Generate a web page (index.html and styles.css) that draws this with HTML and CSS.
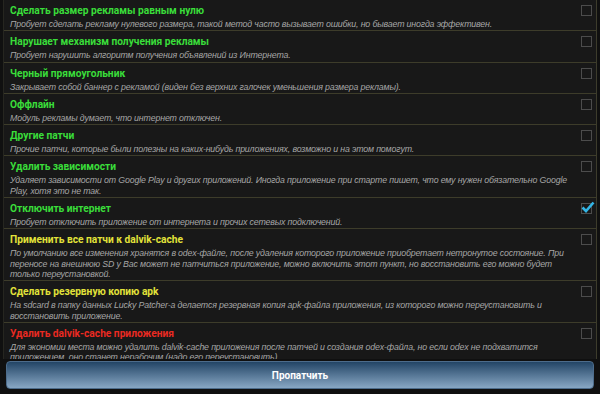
FILE: index.html
```html
<!DOCTYPE html>
<html lang="ru">
<head>
  <meta charset="UTF-8" />
  <title>Патчи</title>
  <meta name="viewport" content="width=device-width, initial-scale=1.0" />
  <link rel="stylesheet" href="styles.css">
</head>
<body>

<div class="list">
  <div class="item">
    <div class="text">
      <div class="title green">Сделать размер рекламы равным нулю</div>
      <div class="desc">Пробует сделать рекламу нулевого размера, такой метод часто вызывает ошибки, но бывает иногда эффективен.</div>
    </div>
    <span class="check"></span>
  </div>

  <div class="item">
    <div class="text">
      <div class="title green">Нарушает механизм получения рекламы</div>
      <div class="desc">Пробует нарушить алгоритм получения объявлений из Интернета.</div>
    </div>
    <span class="check"></span>
  </div>

  <div class="item">
    <div class="text">
      <div class="title green">Черный прямоугольник</div>
      <div class="desc">Закрывает собой баннер с рекламой (виден без верхних галочек уменьшения размера рекламы).</div>
    </div>
    <span class="check"></span>
  </div>

  <div class="item">
    <div class="text">
      <div class="title green">Оффлайн</div>
      <div class="desc">Модуль рекламы думает, что интернет отключен.</div>
    </div>
    <span class="check"></span>
  </div>

  <div class="item">
    <div class="text">
      <div class="title green">Другие патчи</div>
      <div class="desc">Прочие патчи, которые были полезны на каких-нибудь приложениях, возможно и на этом помогут.</div>
    </div>
    <span class="check"></span>
  </div>

  <div class="item">
    <div class="text">
      <div class="title green">Удалить зависимости</div>
      <div class="desc">Удаляет зависимости от Google Play и других приложений. Иногда приложение при старте пишет, что ему нужен обязательно Google Play, хотя это не так.</div>
    </div>
    <span class="check"></span>
  </div>

  <div class="item">
    <div class="text">
      <div class="title green">Отключить интернет</div>
      <div class="desc">Пробует отключить приложение от интернета и прочих сетевых подключений.</div>
    </div>
    <span class="check checked">
      <svg width="14" height="12" viewBox="0 0 14 12"><path d="M1.5 6.5 L5 10 L12.5 1.5" fill="none" stroke="#33b5e5" stroke-width="2.6"/></svg>
    </span>
  </div>

  <div class="item">
    <div class="text">
      <div class="title yellow">Применить все патчи к dalvik-cache</div>
      <div class="desc">По умолчанию все изменения хранятся в odex-файле, после удаления которого приложение приобретает нетронутое состояние. При переносе на внешнюю SD у Вас может не патчиться приложение, можно включить этот пункт, но восстановить его можно будет только переустановкой.</div>
    </div>
    <span class="check"></span>
  </div>

  <div class="item">
    <div class="text">
      <div class="title yellow">Сделать резервную копию apk</div>
      <div class="desc">На sdcard в папку данных Lucky Patcher-а делается резервная копия apk-файла приложения, из которого можно переустановить и восстановить приложение.</div>
    </div>
    <span class="check"></span>
  </div>

  <div class="item">
    <div class="text">
      <div class="title red">Удалить dalvik-cache приложения</div>
      <div class="desc">Для экономии места можно удалить dalvik-cache приложения после патчей и создания odex-файла, но если odex не подхватится приложением, оно станет нерабочим (надо его переустановить).</div>
    </div>
    <span class="check"></span>
  </div>
</div>

<div class="bottom">
  <button class="patch">Пропатчить</button>
</div>

</body>
</html>
```

FILE: styles.css
```css
html, body {
  height: 100%;
}
body {
  margin: 0;
  padding: 0;
  background: #101010;
  font-family: Roboto, "Noto Sans", sans-serif;
  display: flex;
  flex-direction: column;
  overflow: hidden;
}
.list {
  height: 360px;
  overflow: hidden;
  margin: 0 3px;
  background: #181818;
  border-left: 1px solid #262620;
  border-right: 1px solid #3d3c2c;
}
.item {
  display: flex;
  align-items: flex-start;
  padding: 5px 0 1px 6px;
  border-bottom: 1px solid #3d3c2a;
}
.text {
  flex: 1;
  padding-right: 0;
}
.title {
  font-size: 10.2px;
  font-weight: bold;
  line-height: 12px;
}
.green { color: #3add3a; }
.yellow { color: #e2e23a; }
.red { color: #ea2a22; }
.desc {
  margin-top: 2px;
  font-family: "Liberation Sans", Arial, sans-serif;
  font-size: 8.8px;
  font-style: italic;
  letter-spacing: -0.15px;
  line-height: 10.3px;
  color: #a6a6a6;
}
.check {
  flex: none;
  width: 9px;
  height: 9px;
  margin: 0 4px 0 1px;
  border: 1px solid #4c4c4c;
  position: relative;
}
.check svg {
  position: absolute;
  left: -1px;
  top: -3px;
}
.bottom {
  flex: 1;
  padding: 2px 6px 5px 6px;
}
.patch {
  width: 100%;
  height: 28px;
  border: 1px solid #4d6c8b;
  border-radius: 4px;
  background: linear-gradient(#234566, #88a7c4);
  color: #fff;
  font-family: Roboto, "Noto Sans", sans-serif;
  font-size: 10px;
  font-weight: bold;
}
```
